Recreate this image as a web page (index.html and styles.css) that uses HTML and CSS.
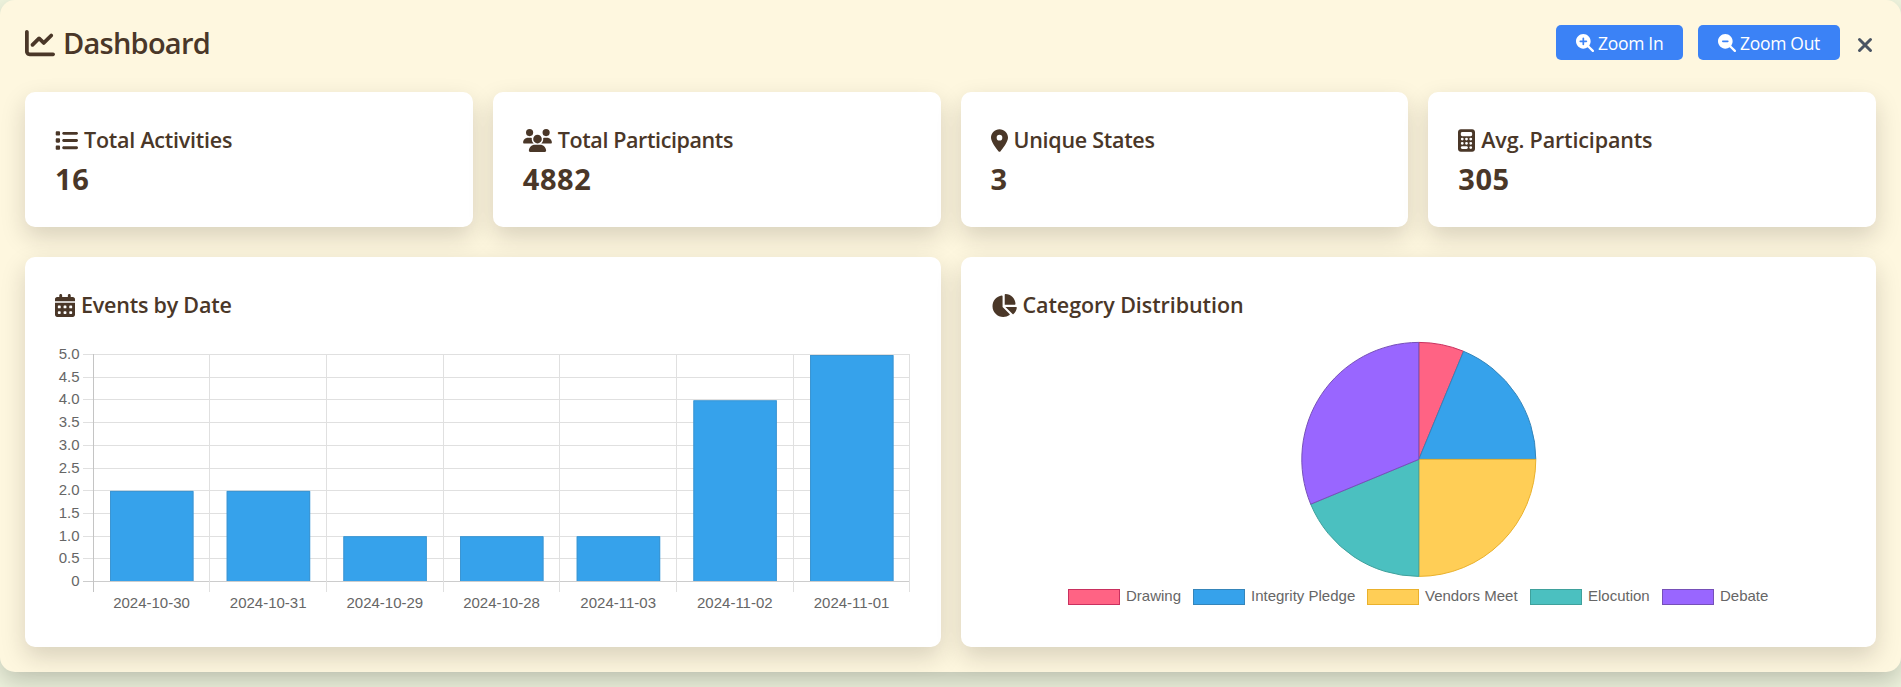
FILE: index.html
```html
<!DOCTYPE html>
<html lang="en">
<head>
<meta charset="utf-8">
<title>Dashboard</title>
<link rel="stylesheet" href="styles.css">
</head>
<body>
<main class="panel">
  <header class="header">
    <h1 class="title"><svg class="icon icon-title" viewBox="0 0 512 512"><path d="M64 64c0-17.7-14.3-32-32-32S0 46.3 0 64V400c0 44.2 35.8 80 80 80H480c17.7 0 32-14.3 32-32s-14.3-32-32-32H80c-8.8 0-16-7.2-16-16V64zm406.6 86.6c12.5-12.5 12.5-32.8 0-45.3s-32.8-12.5-45.3 0L320 210.7l-57.4-57.4c-12.5-12.5-32.8-12.5-45.3 0l-112 112c-12.5 12.5-12.5 32.8 0 45.3s32.8 12.5 45.3 0L240 221.3l57.4 57.4c12.5 12.5 32.8 12.5 45.3 0l128-128z"/></svg><span class="t-dash">Dashboard</span></h1>
    <div class="actions">
      <button class="btn btn-in"><svg class="icon icon-btn" viewBox="0 0 512 512"><path d="M416 208c0 45.9-14.9 88.3-40 122.7L502.6 457.4c12.5 12.5 12.5 32.8 0 45.3s-32.8 12.5-45.3 0L330.7 376c-34.4 25.2-76.8 40-122.7 40C93.1 416 0 322.9 0 208S93.1 0 208 0S416 93.1 416 208zM184 296c0 13.3 10.7 24 24 24s24-10.7 24-24V232h64c13.3 0 24-10.7 24-24s-10.7-24-24-24H232V120c0-13.3-10.7-24-24-24s-24 10.7-24 24v64H120c-13.3 0-24 10.7-24 24s10.7 24 24 24h64v64z"/></svg><span>Zoom In</span></button>
      <button class="btn btn-out"><svg class="icon icon-btn" viewBox="0 0 512 512"><path d="M416 208c0 45.9-14.9 88.3-40 122.7L502.6 457.4c12.5 12.5 12.5 32.8 0 45.3s-32.8 12.5-45.3 0L330.7 376c-34.4 25.2-76.8 40-122.7 40C93.1 416 0 322.9 0 208S93.1 0 208 0S416 93.1 416 208zM136 184c-13.3 0-24 10.7-24 24s10.7 24 24 24H280c13.3 0 24-10.7 24-24s-10.7-24-24-24H136z"/></svg><span>Zoom Out</span></button>
      <button class="close" aria-label="Close"><svg class="icon-close" viewBox="0 0 16 16"><path d="M2.5 2.5 13.5 13.5M13.5 2.5 2.5 13.5"/></svg></button>
    </div>
  </header>

  <section class="stats">
    <article class="card stat">
      <h2 class="label"><svg class="icon" viewBox="0 0 512 512"><path d="M40 48C26.7 48 16 58.7 16 72v48c0 13.3 10.7 24 24 24H88c13.3 0 24-10.7 24-24V72c0-13.3-10.7-24-24-24H40zM192 64c-17.7 0-32 14.3-32 32s14.3 32 32 32H480c17.7 0 32-14.3 32-32s-14.3-32-32-32H192zm0 160c-17.7 0-32 14.3-32 32s14.3 32 32 32H480c17.7 0 32-14.3 32-32s-14.3-32-32-32H192zm0 160c-17.7 0-32 14.3-32 32s14.3 32 32 32H480c17.7 0 32-14.3 32-32s-14.3-32-32-32H192zM16 232v48c0 13.3 10.7 24 24 24H88c13.3 0 24-10.7 24-24V232c0-13.3-10.7-24-24-24H40c-13.3 0-24 10.7-24 24zM40 368c-13.3 0-24 10.7-24 24v48c0 13.3 10.7 24 24 24H88c13.3 0 24-10.7 24-24V392c0-13.3-10.7-24-24-24H40z"/></svg><span class="t-act">Total Activities</span></h2>
      <p class="value">16</p>
    </article>
    <article class="card stat">
      <h2 class="label"><svg class="icon icon-users" viewBox="0 0 640 512"><path d="M144 0a80 80 0 1 1 0 160A80 80 0 1 1 144 0zM512 0a80 80 0 1 1 0 160A80 80 0 1 1 512 0zM0 298.7C0 239.8 47.8 192 106.7 192h42.7c15.9 0 31 3.5 44.6 9.7c-1.3 7.2-1.9 14.7-1.9 22.3c0 38.2 16.8 72.5 43.3 96c-.2 0-.4 0-.7 0H21.3C9.6 320 0 310.4 0 298.7zM405.3 320c-.2 0-.4 0-.7 0c26.6-23.5 43.3-57.8 43.3-96c0-7.6-.7-15-1.9-22.3c13.6-6.3 28.7-9.7 44.6-9.7h42.7C592.2 192 640 239.8 640 298.7c0 11.8-9.6 21.3-21.3 21.3H405.3zM224 224a96 96 0 1 1 192 0 96 96 0 1 1 -192 0zM128 485.3C128 411.7 187.7 352 261.3 352H378.7C452.3 352 512 411.7 512 485.3c0 14.7-11.9 26.7-26.7 26.7H154.7c-14.7 0-26.7-11.9-26.7-26.7z"/></svg><span class="t-part">Total Participants</span></h2>
      <p class="value">4882</p>
    </article>
    <article class="card stat">
      <h2 class="label"><svg class="icon icon-narrow" viewBox="0 0 384 512"><path d="M215.7 499.2C267 435 384 279.4 384 192C384 86 298 0 192 0S0 86 0 192c0 87.4 117 243 168.3 307.2c12.3 15.3 35.1 15.3 47.4 0zM192 128a64 64 0 1 1 0 128 64 64 0 1 1 0-128z"/></svg><span class="t-states">Unique States</span></h2>
      <p class="value">3</p>
    </article>
    <article class="card stat">
      <h2 class="label"><svg class="icon icon-narrow" viewBox="0 0 384 512"><path d="M64 0C28.7 0 0 28.7 0 64V448c0 35.3 28.7 64 64 64H320c35.3 0 64-28.7 64-64V64c0-35.3-28.7-64-64-64H64zM96 64H288c17.7 0 32 14.3 32 32v32c0 17.7-14.3 32-32 32H96c-17.7 0-32-14.3-32-32V96c0-17.7 14.3-32 32-32zm32 160a32 32 0 1 1 -64 0 32 32 0 1 1 64 0zM96 352a32 32 0 1 1 0-64 32 32 0 1 1 0 64zM64 416c0-17.7 14.3-32 32-32h96c17.7 0 32 14.3 32 32s-14.3 32-32 32H96c-17.7 0-32-14.3-32-32zM192 256a32 32 0 1 1 0-64 32 32 0 1 1 0 64zm32 64a32 32 0 1 1 -64 0 32 32 0 1 1 64 0zm64-64a32 32 0 1 1 0-64 32 32 0 1 1 0 64zm32 64a32 32 0 1 1 -64 0 32 32 0 1 1 64 0zM288 448a32 32 0 1 1 0-64 32 32 0 1 1 0 64z"/></svg><span class="t-avg">Avg. Participants</span></h2>
      <p class="value">305</p>
    </article>
  </section>

  <section class="charts">
    <article class="card chart-card">
      <h2 class="label"><svg class="icon icon-cal" viewBox="0 0 448 512"><path d="M128 0c17.7 0 32 14.3 32 32V64H288V32c0-17.7 14.3-32 32-32s32 14.3 32 32V64h48c26.5 0 48 21.5 48 48v48H0V112C0 85.5 21.5 64 48 64H96V32c0-17.7 14.3-32 32-32zM0 192H448V464c0 26.5-21.5 48-48 48H48c-26.5 0-48-21.5-48-48V192zm64 80v32c0 8.8 7.2 16 16 16h32c8.8 0 16-7.2 16-16V272c0-8.8-7.2-16-16-16H80c-8.8 0-16 7.2-16 16zm128 0v32c0 8.8 7.2 16 16 16h32c8.8 0 16-7.2 16-16V272c0-8.8-7.2-16-16-16H208c-8.8 0-16 7.2-16 16zm144-16c-8.8 0-16 7.2-16 16v32c0 8.8 7.2 16 16 16h32c8.8 0 16-7.2 16-16V272c0-8.8-7.2-16-16-16H336zM64 400v32c0 8.8 7.2 16 16 16h32c8.8 0 16-7.2 16-16V400c0-8.8-7.2-16-16-16H80c-8.8 0-16 7.2-16 16zm144-16c-8.8 0-16 7.2-16 16v32c0 8.8 7.2 16 16 16h32c8.8 0 16-7.2 16-16V400c0-8.8-7.2-16-16-16H208zm112 16v32c0 8.8 7.2 16 16 16h32c8.8 0 16-7.2 16-16V400c0-8.8-7.2-16-16-16H336c-8.8 0-16 7.2-16 16z"/></svg><span class="t-events">Events by Date</span></h2>
      <svg class="plot" id="bars" width="856" height="280" viewBox="55 337 856 280"></svg>
    </article>
    <article class="card chart-card">
      <h2 class="label"><svg class="icon icon-pie" viewBox="0 0 576 512"><path d="M304 240V16.6c0-9 7-16.6 16-16.6C443.7 0 544 100.3 544 224c0 9-7.6 16-16.6 16H304zM32 272C32 150.7 122.1 50.3 239 34.3c9.2-1.3 17 6.1 17 15.4V288L412.5 444.5c6.7 6.7 6.2 17.7-1.5 23.1C371.8 495.6 323.8 512 272 512C139.5 512 32 404.6 32 272zm526.4 16c9.3 0 16.6 7.8 15.4 17c-7.7 55.9-34.6 105.6-73.9 142.3c-6 5.6-15.4 5.2-21.2-.7L320 288H558.4z"/></svg><span class="t-cat">Category Distribution</span></h2>
      <svg class="plot" id="pie" width="855" height="280" viewBox="991 337 855 280"></svg>
    </article>
  </section>
</main>
<script src="charts.js"></script>
</body>
</html>
```
FILE: styles.css
```css
* { box-sizing: border-box; }
html { background: #eff4de; }
body {
  margin: 0;
  height: 687px;
  overflow: hidden;
  background: #eff4de;
  color: #4a3728;
  font-family: "Open Sans", "Noto Sans", sans-serif;
}
.panel {
  height: 672px;
  padding: 25px;
  border-radius: 15px;
  background: #fef7df;
  box-shadow: 0 10px 25px rgba(0, 0, 0, 0.2);
}
.header { display: flex; justify-content: space-between; align-items: flex-start; height: 67px; }
.title { display: flex; align-items: center; gap: 8px; margin: 0; height: 36px; font-size: 29px; font-weight: 600; line-height: 36px; }
.icon { display: block; flex: none; width: 23px; height: 23px; fill: currentColor; }
.icon-title { width: 30px; height: 30px; }
.icon-btn { width: 18px; height: 18px; }
.icon-users { width: 29px; }
.icon-narrow { width: 17px; }
.icon-cal { width: 20px; }
.icon-pie { width: 26px; }
.t-dash { letter-spacing: -0.75px; }
.t-act { letter-spacing: -0.24px; }
.t-part { letter-spacing: -0.4px; }
.t-states { letter-spacing: -0.28px; }
.t-avg { letter-spacing: -0.15px; }
.t-events { letter-spacing: -0.22px; }
.t-cat { letter-spacing: -0.08px; }
.actions { display: flex; align-items: flex-start; }
.btn {
  display: flex; align-items: center; gap: 4px;
  height: 35px; padding: 0 0 0 20px; margin: 0 15px 0 0;
  border: 0; border-radius: 5px; background: #3b82f6; color: #fff;
  font: 400 17.5px/35px "Open Sans", "Noto Sans", sans-serif; letter-spacing: -0.3px; white-space: nowrap;
}
.btn span { padding-top: 2px; }
.btn-in { width: 127px; }
.btn-out { width: 142px; }
.close { padding: 12px 3px 0 2px; border: 0; background: none; }
.icon-close { display: block; width: 16px; height: 16px; fill: none; stroke: #4b5563; stroke-width: 3; stroke-linecap: round; }
.stats { display: grid; grid-template-columns: repeat(4, 1fr); gap: 20px; margin-bottom: 30px; }
.charts { display: grid; grid-template-columns: repeat(2, 1fr); gap: 20px; }
.card { border-radius: 10px; background: #fff; box-shadow: 0 10px 25px rgba(30, 25, 15, 0.17); padding: 30px; min-width: 0; }
.stat { height: 135px; }
.label { display: flex; align-items: center; gap: 6px; height: 36px; margin: 0; font-size: 21.5px; font-weight: 600; line-height: 36px; white-space: nowrap; }
.value { margin: 0; font-size: 29px; font-weight: 700; line-height: 41px; letter-spacing: 0.55px; }
.chart-card { height: 390px; }
.plot { display: block; margin-top: 14px; font-family: "Liberation Sans", Arial, sans-serif; font-size: 15px; fill: #666; }
```
FILE: charts.js
```js
const NS = 'http://www.w3.org/2000/svg';

function add(svg, tag, attrs, text) {
  const el = document.createElementNS(NS, tag);
  for (const key in attrs) el.setAttribute(key, attrs[key]);
  if (text !== undefined) el.textContent = text;
  svg.appendChild(el);
}

// Bar chart: events per date
const bars = document.getElementById('bars');
const rows = [354, 377, 399, 422, 445, 468, 490, 513, 536, 558, 581];
const cols = [93, 209, 326, 443, 559, 676, 793, 909];
rows.forEach((y, i) => {
  add(bars, 'rect', { x: 83, y, width: 827, height: 1, fill: i === 10 ? '#ccc' : '#e0e0e0' });
  const label = i === 10 ? '0' : (5 - i * 0.5).toFixed(1);
  add(bars, 'text', { x: 79.5, y: y + 5, 'text-anchor': 'end' }, label);
});
cols.forEach((x, i) => {
  add(bars, 'rect', { x, y: 354, width: 1, height: 238, fill: i === 0 ? '#c4c4c4' : '#e0e0e0' });
});
const data = [['2024-10-30', 2], ['2024-10-31', 2], ['2024-10-29', 1], ['2024-10-28', 1], ['2024-11-03', 1], ['2024-11-02', 4], ['2024-11-01', 5]];
data.forEach(([date, n], i) => {
  const x = 110 + i * 116.67;
  const top = 581.5 - n * 45.3;
  add(bars, 'rect', { x, y: top, width: 83.5, height: 581 - top, fill: '#36a2eb' });
  add(bars, 'path', { d: `M${x + 0.5} 581V${top + 0.5}H${x + 83}V581`, fill: 'none', stroke: '#3f90c8', 'stroke-opacity': 0.7 });
  add(bars, 'text', { x: x + 41.5, y: 608, 'text-anchor': 'middle' }, date);
});

// Pie chart: activities per category
const pie = document.getElementById('pie');
const slices = [
  ['Drawing', 1, '#ff6384', '#c9305f', 1068],
  ['Integrity Pledge', 3, '#36a2eb', '#3585ba', 1193],
  ['Vendors Meet', 4, '#ffce56', '#eab12c', 1367],
  ['Elocution', 3, '#4bc0c0', '#3fa19c', 1530],
  ['Debate', 5, '#9966ff', '#7650b8', 1662]
];
const cx = 1418.8, cy = 459.4, r = 117;
let angle = -Math.PI / 2;
slices.forEach(([name, n, fill, stroke, x]) => {
  const end = angle + n * Math.PI / 8;
  const p = a => `${cx + r * Math.cos(a)} ${cy + r * Math.sin(a)}`;
  add(pie, 'path', { d: `M${cx} ${cy}L${p(angle)}A${r} ${r} 0 0 1 ${p(end)}Z`, fill, stroke, 'stroke-width': 1 });
  add(pie, 'rect', { x: x + 0.5, y: 589.5, width: 51, height: 15, fill, stroke });
  add(pie, 'text', { x: x + 58, y: 601 }, name);
  angle = end;
});
```
